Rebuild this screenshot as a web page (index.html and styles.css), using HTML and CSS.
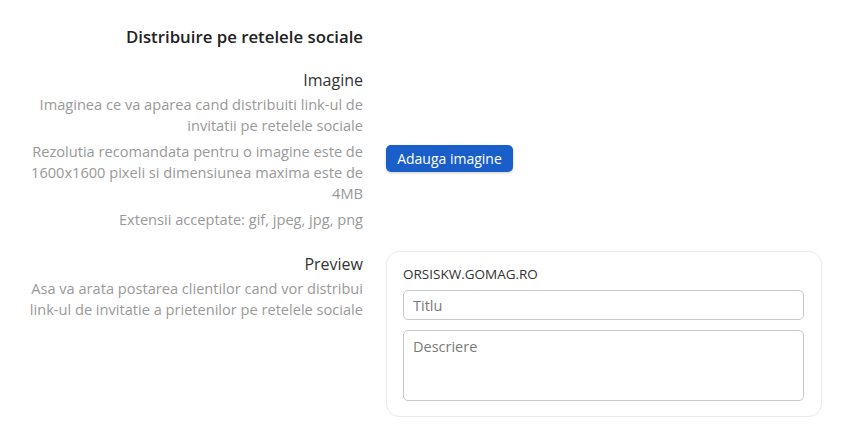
FILE: index.html
```html
<!doctype html>
<html lang="ro">
<head>
	<meta charset="UTF-8" />
	<title>Distribuire pe retelele sociale</title>
<link rel="stylesheet" href="styles.css">
</head>
<body>
	<section class="social">
		<h2 class="social-title">Distribuire pe retelele sociale</h2>

		<div class="row row-image">
			<div class="info">
				<h3>Imagine</h3>
				<p>Imaginea ce va aparea cand distribuiti link-ul de invitatii pe retelele sociale</p>
				<p>Rezolutia recomandata pentru o imagine este de 1600x1600 pixeli si dimensiunea maxima este de 4MB</p>
				<p>Extensii acceptate: gif, jpeg, jpg, png</p>
			</div>
			<div class="field">
				<button type="button" class="btn">Adauga imagine</button>
			</div>
		</div>

		<div class="row row-preview">
			<div class="info">
				<h3>Preview</h3>
				<p>Asa va arata postarea clientilor cand vor distribui link-ul de invitatie a prietenilor pe retelele sociale</p>
			</div>
			<div class="field">
				<div class="card">
					<div class="domain">ORSISKW.GOMAG.RO</div>
					<input type="text" class="input" placeholder="Titlu" />
					<textarea class="input area" placeholder="Descriere"></textarea>
				</div>
			</div>
		</div>
	</section>
</body>
</html>
```

FILE: styles.css
```css
*{
	margin: 0;
	padding: 0;
	box-sizing: border-box;
}
body{
	background: #fff;
	font-family: "Open Sans", "Liberation Sans", sans-serif;
	color: #333;
}
.social{
	padding: 26px 0 0 18px;
}
.social-title{
	width: 345px;
	text-align: right;
	font-size: 16.8px;
	font-weight: 600;
	line-height: 22px;
	color: #222;
	margin-bottom: 21px;
}
.row{
	display: flex;
	gap: 23px;
}
.row-image{
	align-items: center;
}
.row-image .info{
	padding-bottom: 17px;
}
.row-preview{
	margin-top: 4px;
	align-items: flex-start;
}
.row-preview .info{
	padding-top: 2px;
}
.info{
	width: 345px;
	text-align: right;
}
.info h3{
	font-size: 16px;
	font-weight: 400;
	line-height: 22px;
	color: #333;
	margin-bottom: 3px;
}
.info p{
	font-size: 14.6px;
	line-height: 21px;
	color: #999;
}
.info p + p{
	margin-top: 5px;
}
.btn{
	display: block;
	width: 127px;
	height: 27px;
	border: 0;
	border-radius: 5px;
	background: #1a5fc9;
	color: #fff;
	font-family: inherit;
	font-size: 14px;
	box-shadow: 0 1px 3px rgba(0,0,0,.2);
	margin-top: 1px;
}
.card{
	width: 436px;
	height: 166px;
	border: 1px solid #ebebeb;
	border-radius: 13px;
	padding: 13px 17px 0 16px;
}
.domain{
	font-size: 13.5px;
	line-height: 18px;
	color: #333;
	margin-bottom: 7px;
}
.input{
	display: block;
	width: 401px;
	height: 30px;
	border: 1px solid #c8c8c8;
	border-radius: 5px;
	padding: 0 9px;
	font-family: inherit;
	font-size: 14.5px;
	color: #333;
	outline: none;
}
.input::placeholder{
	color: #7a7a7a;
}
.area{
	height: 71px;
	margin-top: 10px;
	padding: 6px 9px;
	line-height: 20px;
	resize: none;
}
```
